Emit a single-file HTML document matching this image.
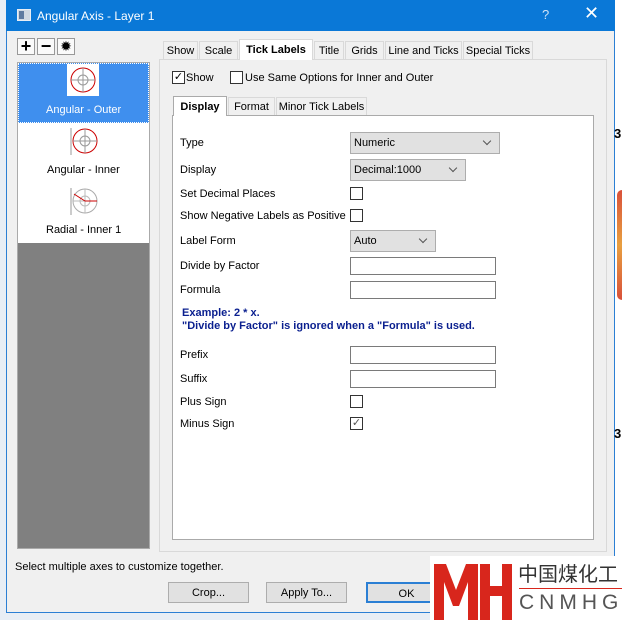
<!DOCTYPE html>
<html><head><meta charset="utf-8"><style>
*{box-sizing:border-box;margin:0;padding:0}
body{width:622px;height:620px;position:relative;overflow:hidden;background:#fff;font-family:"Liberation Sans",sans-serif;font-size:11px;color:#000;white-space:nowrap}
.a{position:absolute}
.win{left:6px;top:0;width:609px;height:613px;background:#f0f0f0;border:1px solid #2b7fd4}
.title{left:6px;top:0;width:609px;height:31px;background:#0a78d7}
.cb{position:absolute;width:13px;height:13px;border:1px solid #333;background:#fff}
.sel{position:absolute;height:22px;background:#e1e1e1;border:1px solid #adadad;padding:4px 0 0 3px}
.sel:after{content:"";position:absolute;right:9px;top:5px;width:5px;height:5px;border-right:1px solid #555;border-bottom:1px solid #555;transform:rotate(45deg)}
.inp{position:absolute;left:350px;width:146px;height:18px;border:1px solid #7a7a7a;background:#fff}
.lbl{position:absolute;left:180px}
.tab{position:absolute;top:41px;height:18px;border:1px solid #d9d9d9;border-bottom:none;background:#f0f0f0;padding:3px 0 0 0;text-align:center}
.btn{position:absolute;top:582px;width:81px;height:21px;background:#e1e1e1;border:1px solid #adadad;text-align:center;padding-top:4px}
</style></head><body>
<div class="a" style="left:0;top:0;width:6px;height:620px;background:#e8eef5"></div>
<div class="a" style="left:0;top:613px;width:622px;height:7px;background:#e8eef5"></div>
<div class="a win"></div>
<div class="a title"></div>
<div class="a" style="left:17px;top:9px;width:14px;height:12px;background:#cfd8e2;border:1px solid #e8eef5"><div class="a" style="left:1px;top:1px;width:5px;height:8px;background:#5d7aa0"></div></div>
<div class="a" style="left:37px;top:9px;color:#fff;font-size:12px">Angular Axis - Layer 1</div>
<div class="a" style="left:542px;top:7px;color:#cfe3f7;font-size:13px">?</div>
<div class="a" style="left:584px;top:3px;color:#fff;font-size:18px">✕</div>
<div class="a" style="left:17px;top:38px;width:18px;height:17px;border:1px solid #999;background:#fafafa;font-weight:bold;font-size:18px;line-height:14px;text-align:center">+</div>
<div class="a" style="left:37px;top:38px;width:18px;height:17px;border:1px solid #999;background:#fafafa;font-weight:bold;font-size:18px;line-height:14px;text-align:center">−</div>
<div class="a" style="left:57px;top:38px;width:18px;height:17px;border:1px solid #999;background:#fafafa;font-size:14px;line-height:15px;text-align:center">✹</div>
<div class="a" style="left:17px;top:62px;width:133px;height:487px;background:#808080;border:1px solid #aaa"></div>
<div class="a" style="left:18px;top:63px;width:131px;height:180px;background:#fff"></div>
<div class="a" style="left:18px;top:63px;width:131px;height:60px;background:#3f8fee;border:1px dotted #fff"></div>
<svg class="a" style="left:67px;top:64px" width="32" height="32"><rect width="32" height="32" fill="#fff"/><circle cx="16" cy="16" r="12" fill="none" stroke="#c00"/><circle cx="16" cy="16" r="5" fill="none" stroke="#999"/><path d="M16 4V28M4 16H28" stroke="#999"/></svg>
<div class="a" style="left:46px;top:104px;color:#fff">Angular - Outer</div>
<svg class="a" style="left:70px;top:126px" width="30" height="30"><path d="M1 2V29" stroke="#999"/><circle cx="15" cy="15" r="12" fill="none" stroke="#c00"/><circle cx="15" cy="15" r="5" fill="none" stroke="#999"/><path d="M15 3V27M3 15H27" stroke="#999"/></svg>
<div class="a" style="left:47px;top:164px">Angular - Inner</div>
<svg class="a" style="left:70px;top:186px" width="30" height="30"><path d="M1 2V29" stroke="#999"/><circle cx="15" cy="15" r="12" fill="none" stroke="#aaa"/><circle cx="15" cy="15" r="5" fill="none" stroke="#bbb"/><path d="M15 3V27M3 15H27" stroke="#bbb"/><path d="M4 8L15 15H27" stroke="#c00" fill="none"/></svg>
<div class="a" style="left:46px;top:224px">Radial - Inner 1</div>
<div class="a" style="left:159px;top:59px;width:448px;height:493px;border:1px solid #d9d9d9;background:#f0f0f0"></div>
<div class="tab" style="left:163px;width:35px">Show</div>
<div class="tab" style="left:199px;width:39px">Scale</div>
<div class="tab" style="left:239px;top:39px;width:74px;height:21px;background:#fff;font-weight:bold;padding-top:4px">Tick Labels</div>
<div class="tab" style="left:314px;width:30px">Title</div>
<div class="tab" style="left:345px;width:39px">Grids</div>
<div class="tab" style="left:385px;width:77px">Line and Ticks</div>
<div class="tab" style="left:463px;width:70px">Special Ticks</div>
<div class="cb" style="left:172px;top:71px;text-align:center;line-height:11px;font-size:11px">✓</div>
<div class="a" style="left:186px;top:72px">Show</div>
<div class="cb" style="left:230px;top:71px"></div>
<div class="a" style="left:245px;top:72px">Use Same Options for Inner and Outer</div>
<div class="a" style="left:172px;top:115px;width:422px;height:425px;border:1px solid #aaa;background:#fff"></div>
<div class="tab" style="left:173px;top:96px;width:54px;height:20px;background:#fff;font-weight:bold;padding-top:4px;border-color:#aaa">Display</div>
<div class="tab" style="left:228px;top:97px;width:47px">Format</div>
<div class="tab" style="left:276px;top:97px;width:91px">Minor Tick Labels</div>
<div class="lbl" style="top:137px">Type</div>
<div class="sel" style="left:350px;top:132px;width:150px">Numeric</div>
<div class="lbl" style="top:164px">Display</div>
<div class="sel" style="left:350px;top:159px;width:116px">Decimal:1000</div>
<div class="lbl" style="top:188px">Set Decimal Places</div>
<div class="cb" style="left:350px;top:187px"></div>
<div class="lbl" style="top:210px">Show Negative Labels as Positive</div>
<div class="cb" style="left:350px;top:209px"></div>
<div class="lbl" style="top:235px">Label Form</div>
<div class="sel" style="left:350px;top:230px;width:86px">Auto</div>
<div class="lbl" style="top:260px">Divide by Factor</div>
<div class="inp" style="top:257px"></div>
<div class="lbl" style="top:284px">Formula</div>
<div class="inp" style="top:281px"></div>
<div class="a" style="left:182px;top:307px;color:#0a1f8f;font-weight:bold;font-size:11px;line-height:13px">Example: 2 * x.<br>"Divide by Factor" is ignored when a "Formula" is used.</div>
<div class="lbl" style="top:349px">Prefix</div>
<div class="inp" style="top:346px"></div>
<div class="lbl" style="top:373px">Suffix</div>
<div class="inp" style="top:370px"></div>
<div class="lbl" style="top:396px">Plus Sign</div>
<div class="cb" style="left:350px;top:395px"></div>
<div class="lbl" style="top:418px">Minus Sign</div>
<div class="cb" style="left:350px;top:417px;text-align:center;line-height:11px;font-size:11px;color:#555">✓</div>
<div class="a" style="left:15px;top:561px">Select multiple axes to customize together.</div>
<div class="btn" style="left:168px">Crop...</div>
<div class="btn" style="left:266px">Apply To...</div>
<div class="btn" style="left:366px;border:2px solid #2b7fd4">OK</div>
<div class="a" style="left:615px;top:0;width:7px;height:613px;background:#fff"></div>
<div class="a" style="left:617px;top:190px;width:5px;height:110px;background:linear-gradient(#d9503a,#e8a040,#d8503a);border-radius:30px 0 0 30px"></div>
<div class="a" style="left:614px;top:126px;font-size:13px;font-weight:bold">3</div>
<div class="a" style="left:614px;top:426px;font-size:13px;font-weight:bold">3</div>
<div class="a" style="left:430px;top:556px;width:192px;height:64px;background:#fff"></div>
<svg class="a" style="left:432px;top:560px" width="82" height="60"><path d="M2 60V4H14L24 30L34 4H46V60H36V22L27 46H21L12 22V60Z" fill="#d8261c"/><path d="M48 4H58V26H70V4H80V60H70V36H58V60H48Z" fill="#d8261c"/></svg>
<div class="a" style="left:518px;top:561px;font-family:'Noto Sans CJK SC',sans-serif;font-size:20px;line-height:24px;color:#333">中国煤化工</div>
<div class="a" style="left:519px;top:588px;width:103px;height:1px;background:#d8261c"></div>
<div class="a" style="left:519px;top:591px;font-size:21px;color:#555;letter-spacing:5px">CNMHG</div>
</body></html>
